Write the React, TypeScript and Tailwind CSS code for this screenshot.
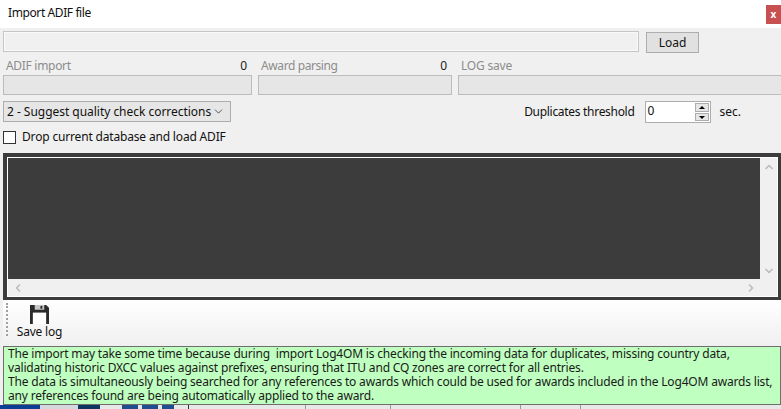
import { ChevronDown, ChevronLeft, ChevronRight, ChevronUp } from 'lucide-react';

const font = "font-['Noto_Sans','DejaVu_Sans',sans-serif]";

function ProgressBlock({ label, value, className, tracking }: { label: string; value?: string; className: string; tracking: string }) {
    return (
        <div className={`flex flex-col shrink-0 ${className}`}>
            <div className="h-[22px] pt-[3px] flex items-center justify-between px-[3px] text-[12px] text-[#8c8c8c]">
                <span className={tracking}>{label}</span>
                {value && <span className="text-[#222] pr-[2px]">{value}</span>}
            </div>
            <div className="h-[20px] bg-[#e6e6e6] border border-[#bcbcbc]" />
        </div>
    );
}

function FloppyIcon() {
    return (
        <svg width="19" height="19" viewBox="0 0 20 20">
            <path d="M0 0h17l3 3v17H0z" fill="#2b2b2b" />
            <rect x="3" y="8" width="14" height="12" fill="#fff" />
            <rect x="5" y="0" width="10" height="5" fill="#c8c8c8" />
            <rect x="11" y="1" width="2" height="3" fill="#2b2b2b" />
        </svg>
    );
}

export default function App() {
    return (
        <div className={`w-[781px] h-[409px] overflow-hidden bg-[#f0f0f0] flex flex-col text-[12px] text-[#111] ${font}`}>
            <div className="h-[28px] shrink-0 bg-white flex items-center justify-between pl-[8px]">
                <span className="tracking-[-0.4px] mb-[2px]">Import ADIF file</span>
                <div className="w-[15px] h-[19px] mt-[1px] bg-[#c75050] text-white text-[10px] font-bold flex items-center justify-center">x</div>
            </div>

            <div className="flex items-start mt-[3px] pl-[3px] h-[22px]">
                <div className="w-[636px] h-[21px] bg-[#f0f0f0] border border-[#c6c6c6] shadow-[inset_0_0_0_1px_#fafafa]" />
                <button className="ml-[7px] mt-[1px] w-[53px] h-[21px] bg-[#e1e1e1] border border-[#adadad] flex items-center justify-center">Load</button>
            </div>

            <div className="flex gap-[6px] pl-[3px]">
                <ProgressBlock label="ADIF import" value="0" className="w-[249px]" tracking="tracking-[-0.3px]" />
                <ProgressBlock label="Award parsing" value="0" className="w-[194px]" tracking="tracking-[-0.4px]" />
                <ProgressBlock label="LOG save" className="w-[330px]" tracking="tracking-[-0.2px]" />
            </div>

            <div className="flex items-start mt-[6px] pl-[3px] h-[23px]">
                <div className="w-[228px] h-[21px] bg-[#e6e6e6] border border-[#adadad] flex items-center justify-between pl-[3px] pr-[5px]">
                    <span className="tracking-[-0.03px]">2 - Suggest quality check corrections</span>
                    <ChevronDown size={13} strokeWidth={1.25} />
                </div>
                <span className="ml-auto mt-[2px] tracking-[-0.3px]">Duplicates threshold</span>
                <div className="ml-[10px] w-[66px] h-[22px] bg-white border border-[#adadad] flex justify-between pl-[2px] pr-[1px]">
                    <span className="leading-[17px]">0</span>
                    <div className="flex flex-col justify-center gap-[1px]">
                        <div className="w-[14px] h-[9px] bg-[#e6e6e6] border border-[#adadad] flex items-center justify-center">
                            <div className="border-x-[3px] border-x-transparent border-b-[3px] border-b-black" />
                        </div>
                        <div className="w-[14px] h-[8px] bg-[#e6e6e6] border border-[#adadad] flex items-center justify-center">
                            <div className="border-x-[3px] border-x-transparent border-t-[3px] border-t-black" />
                        </div>
                    </div>
                </div>
                <span className="ml-[9px] mr-[40px] mt-[2px]">sec.</span>
            </div>

            <div className="flex items-center gap-[6px] pl-[3px] mt-[3px] h-[20px]">
                <div className="w-[13px] h-[13px] bg-white border border-[#333]" />
                <span className="tracking-[-0.17px]">Drop current database and load ADIF</span>
            </div>

            <div className="mt-[6px] h-[147px] shrink-0 border-t-[4px] border-l-[4px] border-r-[3px] border-b-[3px] border-[#3c3c3c] ml-[3px] bg-[#f0f0f0] flex flex-col">
                <div className="flex flex-1 min-h-0 border-t border-x border-white">
                    <div className="flex-1 bg-[#3c3c3c]" />
                    <div className="w-[17px] flex flex-col justify-between items-center pt-[3px] pb-[2px] text-[#bdbdbd]">
                        <ChevronUp size={12} strokeWidth={3.5} />
                        <ChevronDown size={12} strokeWidth={3.5} />
                    </div>
                </div>
                <div className="h-[18px] flex items-center justify-between pl-[4px] pr-[20px] text-[#bdbdbd] border-x border-b border-white">
                    <ChevronLeft size={12} strokeWidth={3.5} />
                    <ChevronRight size={12} strokeWidth={3.5} />
                </div>
            </div>

            <div className="h-[47px] shrink-0 flex bg-gradient-to-b from-white to-[#f0f0f0] border-b border-[#6e6e6e] ml-[3px]">
                <div className="w-[3px] ml-[3px] mt-[3px] mb-[10px] border-l-2 border-dotted border-[#a0a0a0]" />
                <div className="ml-[6px] flex flex-col items-center pt-[5px] w-[48px]">
                    <FloppyIcon />
                    <span className="leading-[17px] tracking-[-0.2px] -mt-[1px] pl-[1px]">Save log</span>
                </div>
            </div>

            <div className="ml-[3px] h-[58px] shrink-0 bg-[#bfffbf] border-x border-b border-[#6e6e6e] pl-[4px] text-[12px] leading-[14px] tracking-[-0.18px] text-[#1a1a1a] whitespace-pre">
                {'The import may take some time because during  import Log4OM is checking the incoming data for duplicates, missing country data,\nvalidating historic DXCC values against prefixes, ensuring that ITU and CQ zones are correct for all entries.\nThe data is simultaneously being searched for any references to awards which could be used for awards included in the Log4OM awards list,\nany references found are being automatically applied to the award.'}
            </div>

            <div className="h-[4px] shrink-0 flex bg-[#e8e8e8]">
                <div className="w-[40px] bg-[#0b3f94]" />
                <div className="w-[38px] bg-[#d4d8dc]" />
                <div className="w-[22px] bg-[#0c3560]" />
                <div className="w-[22px]" />
                <div className="w-[16px] bg-[#1f4f8f]" />
                <div className="w-[4px]" />
                <div className="w-[16px] bg-[#1f4f8f]" />
                <div className="w-[4px]" />
                <div className="w-[12px] bg-[#1f4f8f]" />
                <div className="w-[14px]" />
                <div className="w-[117px] border-l border-[#333]" />
                <div className="w-[85px] border-l border-[#999]" />
                <div className="w-[130px] border-l border-[#999]" />
                <div className="w-[60px] border-l border-[#999]" />
                <div className="w-[70px] border-l border-[#999]" />
            </div>
        </div>
    );
}
